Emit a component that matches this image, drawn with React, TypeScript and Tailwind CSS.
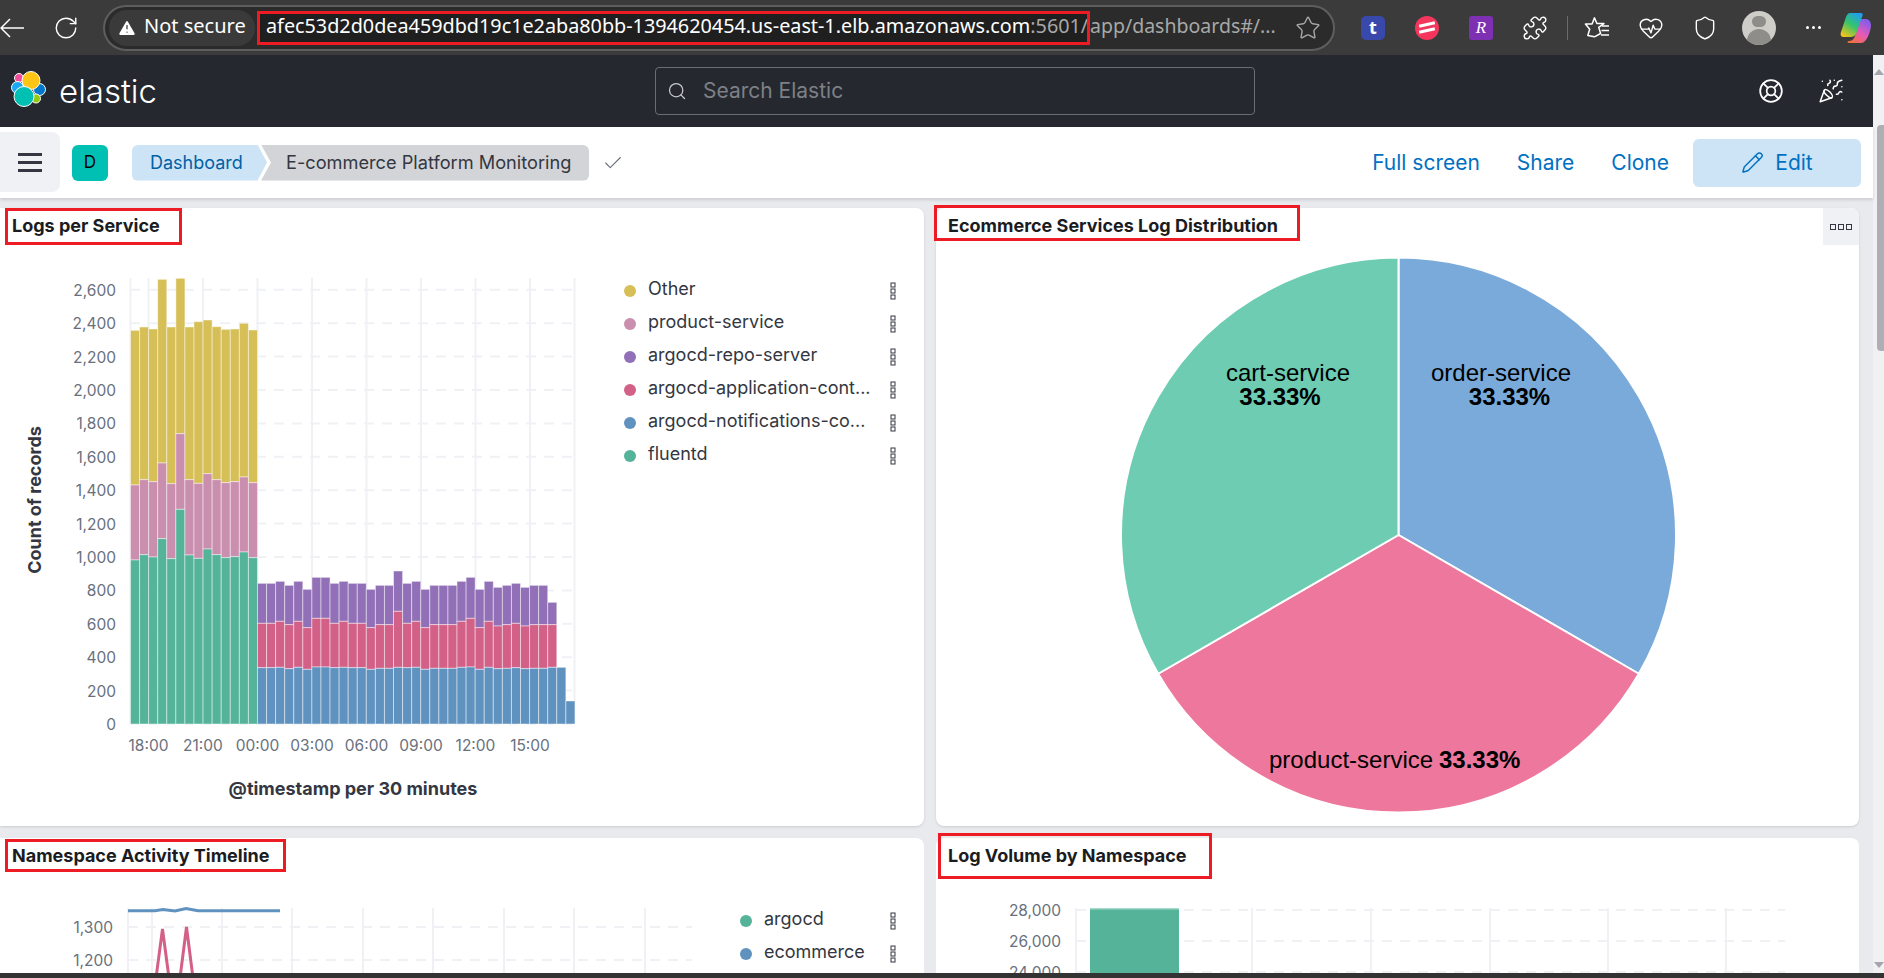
import {
  Check,
  HeartPulse,
  LifeBuoy,
  PartyPopper,
  Pencil,
  Puzzle,
  RotateCw,
  Search,
  Shield,
  Star,
  TriangleAlert,
} from "lucide-react";

const yellow = "#d6bf57";
const pink = "#ca8eae";
const green = "#54b399";
const purple = "#9170b8";
const red = "#d36086";
const blue = "#6092c0";

// bar tops, read off the screenshot in 3x crop units
const earlyTotal = [211, 201, 207, 58, 201, 55, 201, 185, 180, 200, 208, 207, 190, 210];
const earlyPink = [675, 659, 665, 609, 671, 521, 659, 670, 641, 659, 668, 665, 651, 668];
const earlyGreen = [900, 884, 891, 836, 896, 748, 885, 895, 867, 884, 893, 890, 876, 893];
const latePurple = [100, 100, 94, 106, 94, 118, 82, 82, 100, 94, 100, 100, 118, 106, 106, 63, 100, 94, 118, 106, 106, 106, 94, 82, 118, 94, 112, 106, 100, 112, 106, 106, 157];
const lateRed = [220, 220, 214, 224, 214, 233, 205, 205, 220, 214, 220, 220, 233, 224, 224, 184, 220, 214, 233, 224, 224, 224, 214, 205, 233, 214, 228, 224, 220, 228, 224, 224, 224];
const lateBlue = [353, 353, 352, 356, 352, 358, 351, 351, 353, 352, 353, 353, 358, 355, 355, 352, 353, 352, 358, 355, 355, 355, 352, 351, 358, 352, 356, 355, 353, 356, 355, 355, 352, 352, 453];

const baseY = 724;
const barX0 = 130.5;
const barW = 9.07;

function Segment({ i, y0, y1, fill }: { i: number; y0: number; y1: number; fill: string }) {
  return (
    <rect
      x={barX0 + i * barW}
      y={y0}
      width={barW}
      height={y1 - y0}
      fill={fill}
      stroke="#ffffff"
      strokeOpacity={0.45}
      strokeWidth={1}
    />
  );
}

function LogsChart() {
  const ticks = [2600, 2400, 2200, 2000, 1800, 1600, 1400, 1200, 1000, 800, 600, 400, 200, 0];
  const hours = ["18:00", "21:00", "00:00", "03:00", "06:00", "09:00", "12:00", "15:00"];
  const hourX = [148.5, 203, 257.5, 312, 366.5, 421, 475.5, 530];
  const t1 = (z: number) => 260 + z / 3;
  const t2 = (z: number) => 550 + z / 3;

  return (
    <svg viewBox="0 244 620 582" className="w-[620px] h-[582px] shrink-0 font-['Inter',sans-serif]">
      {[130.5, ...hourX, 574.5].map((x) => (
        <line key={x} x1={x} x2={x} y1={278} y2={724} stroke="#f0f1f5" strokeWidth={2} />
      ))}
      {ticks.map((t) => (
        <line
          key={t}
          x1={130}
          x2={575}
          y1={baseY - t * 0.167}
          y2={baseY - t * 0.167}
          stroke="#f0f1f5"
          strokeWidth={2}
          strokeDasharray="10 8"
        />
      ))}
      {earlyTotal.map((z, i) => (
        <g key={i}>
          <Segment i={i} y0={t1(z)} y1={t1(earlyPink[i])} fill={yellow} />
          <Segment i={i} y0={t1(earlyPink[i])} y1={t1(earlyGreen[i])} fill={pink} />
          <Segment i={i} y0={t1(earlyGreen[i])} y1={baseY} fill={green} />
        </g>
      ))}
      {lateBlue.map((z, i) => (
        <g key={i}>
          {i < latePurple.length && <Segment i={i + 14} y0={t2(latePurple[i])} y1={t2(lateRed[i])} fill={purple} />}
          {i < lateRed.length && <Segment i={i + 14} y0={t2(lateRed[i])} y1={t2(z)} fill={red} />}
          <Segment i={i + 14} y0={t2(z)} y1={baseY} fill={blue} />
        </g>
      ))}
      {ticks.map((t) => (
        <text key={t} x={116} y={baseY - t * 0.167 + 6} textAnchor="end" fontSize={15.5} fill="#69707d">
          {t.toLocaleString("en-US")}
        </text>
      ))}
      {hours.map((h, i) => (
        <text key={h} x={hourX[i]} y={751} textAnchor="middle" fontSize={15.5} fill="#69707d">
          {h}
        </text>
      ))}
      <text x={353} y={795} textAnchor="middle" fontSize={18} fontWeight={700} fill="#343741">
        @timestamp per 30 minutes
      </text>
      <text
        x={0}
        y={0}
        transform="translate(41 500) rotate(-90)"
        textAnchor="middle"
        fontSize={18}
        fontWeight={700}
        fill="#343741"
      >
        Count of records
      </text>
    </svg>
  );
}

function PieChart() {
  const cx = 1398.5;
  const cy = 535;
  const r = 277.5;
  const dx = r * Math.cos(Math.PI / 6);
  const dy = r * Math.sin(Math.PI / 6);
  return (
    <svg viewBox="936 244 923 582" className="w-[923px] h-[582px] font-['Liberation_Sans',Arial,sans-serif]">
      <path d={`M${cx} ${cy} L${cx} ${cy - r} A${r} ${r} 0 0 1 ${cx + dx} ${cy + dy} Z`} fill="#79aad9" stroke="#fff" strokeWidth={2} />
      <path d={`M${cx} ${cy} L${cx + dx} ${cy + dy} A${r} ${r} 0 0 1 ${cx - dx} ${cy + dy} Z`} fill="#ee789d" stroke="#fff" strokeWidth={2} />
      <path d={`M${cx} ${cy} L${cx - dx} ${cy + dy} A${r} ${r} 0 0 1 ${cx} ${cy - r} Z`} fill="#6dccb1" stroke="#fff" strokeWidth={2} />
      <text x={1288} y={381} textAnchor="middle" fontSize={24} fill="#000">cart-service</text>
      <text x={1280} y={405} textAnchor="middle" fontSize={24} fontWeight={700} fill="#000">33.33%</text>
      <text x={1501} y={381} textAnchor="middle" fontSize={24} fill="#000">order-service</text>
      <text x={1509.5} y={405} textAnchor="middle" fontSize={24} fontWeight={700} fill="#000">33.33%</text>
      <text x={1269} y={768} fontSize={24} fill="#000">product-service</text>
      <text x={1439} y={768} fontSize={24} fontWeight={700} fill="#000">33.33%</text>
    </svg>
  );
}

function TimelineChart() {
  const vx = [128, 152, 222, 292, 363, 433, 504, 574, 645];
  return (
    <svg viewBox="0 874 720 104" className="w-[720px] h-[104px] shrink-0 font-['Inter',sans-serif]">
      {vx.map((x) => (
        <line key={x} x1={x} x2={x} y1={908} y2={978} stroke="#f0f1f5" strokeWidth={2} />
      ))}
      {[927, 960].map((y) => (
        <line key={y} x1={128} x2={692} y1={y} y2={y} stroke="#f0f1f5" strokeWidth={2} strokeDasharray="10 8" />
      ))}
      <polyline points="128,910.7 155,910.7 163,909.5 175,911 186,908.5 198,910.7 280,910.7" fill="none" stroke={blue} strokeWidth={3} />
      <polyline points="156,978 162.5,929 169,978" fill="none" stroke={red} strokeWidth={3} />
      <polyline points="180,978 186.5,927 193,978" fill="none" stroke={red} strokeWidth={3} />
      <text x={113} y={933} textAnchor="end" fontSize={15.5} fill="#69707d">1,300</text>
      <text x={113} y={966} textAnchor="end" fontSize={15.5} fill="#69707d">1,200</text>
    </svg>
  );
}

function VolumeChart() {
  const vx = [1076, 1252, 1371, 1490, 1608, 1726];
  return (
    <svg viewBox="936 874 923 104" className="w-[923px] h-[104px] font-['Inter',sans-serif]">
      {vx.map((x) => (
        <line key={x} x1={x} x2={x} y1={908} y2={978} stroke="#f0f1f5" strokeWidth={2} />
      ))}
      {[910, 941, 972].map((y) => (
        <line key={y} x1={1076} x2={1785} y1={y} y2={y} stroke="#f0f1f5" strokeWidth={2} strokeDasharray="10 8" />
      ))}
      <rect x={1090} y={908} width={89} height={70} fill={green} />
      <rect x={1090} y={908} width={89} height={1.5} fill="#a6d9ca" />
      <text x={1061} y={916} textAnchor="end" fontSize={15.5} fill="#69707d">28,000</text>
      <text x={1061} y={947} textAnchor="end" fontSize={15.5} fill="#69707d">26,000</text>
      <text x={1061} y={978} textAnchor="end" fontSize={15.5} fill="#69707d">24,000</text>
    </svg>
  );
}

function Kebab() {
  return (
    <svg width="6" height="18" viewBox="0 0 6 18" className="shrink-0">
      <rect x="1" y="1" width="4" height="4" fill="#fff" stroke="#343741" strokeWidth="1" />
      <rect x="1" y="7" width="4" height="4" fill="#fff" stroke="#343741" strokeWidth="1" />
      <rect x="1" y="13" width="4" height="4" fill="#fff" stroke="#343741" strokeWidth="1" />
    </svg>
  );
}

function Legend({ items, className }: { items: { label: string; color: string }[]; className: string }) {
  return (
    <div className={className}>
      {items.map((item) => (
        <div key={item.label} className="flex items-center h-[33px]">
          <span className="w-3 h-3 rounded-full shrink-0" style={{ backgroundColor: item.color }} />
          <span className="ml-[12px] flex-1 pb-1 text-[18px] text-[#343741] whitespace-nowrap font-['Inter',sans-serif]">
            {item.label}
          </span>
          <Kebab />
        </div>
      ))}
    </div>
  );
}

function PanelTitle({ children }: { children: string }) {
  return (
    <div className="h-9 px-3 pb-[1px] flex items-center text-[18px] font-bold text-[#1a1c21] font-['Inter',sans-serif] whitespace-nowrap">
      {children}
    </div>
  );
}

function ElasticLogo() {
  return (
    <svg viewBox="0 0 40 40" className="w-10 h-10 shrink-0">
      <g stroke="#fff" strokeWidth="1">
        <circle cx="9" cy="7" r="4.5" fill="#f04e98" />
        <circle cx="7.5" cy="16.5" r="6" fill="#1ba9f5" />
        <circle cx="29.5" cy="18.5" r="6" fill="#0077cc" />
        <circle cx="26" cy="27.5" r="4.5" fill="#93c90e" />
        <circle cx="21" cy="9.5" r="9" fill="#fec514" />
        <circle cx="14" cy="25.5" r="10" fill="#00bfb3" />
      </g>
    </svg>
  );
}

function FavoritesIcon() {
  return (
    <svg width="26" height="26" viewBox="0 0 26 26" fill="none" stroke="#fff" strokeWidth="1.6" strokeLinejoin="round">
      <path d="M11 3l2.6 6H21l-5.5 4 2 6.5L11 23l-7 -1.5L6 15 1.5 9.5H8.5z" transform="scale(0.95)" />
      <path d="M18 11h7M17.5 15.5h7.500M17 20h8" />
    </svg>
  );
}

function CopilotIcon() {
  return (
    <svg width="32" height="32" viewBox="0 0 32 32" className="shrink-0">
      <defs>
        <linearGradient id="cp1" x1="0.8" y1="0" x2="0.2" y2="1">
          <stop offset="0" stopColor="#1e9cf5" />
          <stop offset="0.5" stopColor="#35c46b" />
          <stop offset="1" stopColor="#f5c518" />
        </linearGradient>
        <linearGradient id="cp2" x1="0.8" y1="0" x2="0.2" y2="1">
          <stop offset="0" stopColor="#7b5cf0" />
          <stop offset="0.55" stopColor="#e85ab5" />
          <stop offset="1" stopColor="#f2703c" />
        </linearGradient>
      </defs>
      <path d="M20 7h6c3 0 5 3 5 6 0 5-3 13-6 16-1 1-2 2-4 2H9c-2 0-2-2 0-2 3 0 5-2 6-5z" fill="url(#cp2)" />
      <path d="M10 1h11c2 0 2 2 1 4l-6 17c-1 2-3 3-5 3H4c-3 0-4-2-3-5L6 5c1-2 2-4 4-4z" fill="url(#cp1)" />
    </svg>
  );
}

function BrowserBar() {
  return (
    <div className="h-[55px] shrink-0 flex items-center bg-[#3b3b3b] text-white font-['Noto_Sans',sans-serif]">
      <svg width="24" height="24" viewBox="0 0 24 24" fill="none" stroke="#fff" strokeWidth="1.5" className="shrink-0">
        <path d="M24 12H1M10 3l-9 9 9 9" />
      </svg>
      <RotateCw size={26} strokeWidth={1.3} className="ml-[29px] shrink-0" />
      <div className="ml-[24px] w-[1232px] h-[46px] flex items-center rounded-full bg-[#2b2b2b] border-2 border-[#5e5e5e] shrink-0">
        <div className="ml-[4px] w-[146px] h-9 flex items-center rounded-full bg-[#3a3a3a] pl-[8px] text-[20px]">
          <TriangleAlert size={20} fill="#fff" stroke="#3a3a3a" strokeWidth={1.5} className="shrink-0" />
          <span className="ml-[7px] pb-1 whitespace-nowrap">Not secure</span>
        </div>
        <div className="ml-[2px] w-[833px] h-[34px] flex items-center border-[3px] border-[#ed1c24] bg-[#1f1f1f] pl-[6px] pb-1 text-[19.8px] whitespace-nowrap overflow-hidden">
          afec53d2d0dea459dbd19c1e2aba80bb-1394620454.us-east-1.elb.amazonaws.com
          <span className="text-[#a8a8a8]">:5601/</span>
        </div>
        <span className="pb-1 text-[19.5px] text-[#a8a8a8] whitespace-nowrap">app/dashboards#/...</span>
        <Star size={26} strokeWidth={1.3} className="ml-[19px] text-[#a8a8a8] shrink-0" />
      </div>
      <div className="ml-[11px] w-[54px] flex justify-center">
        <span className="w-6 h-6 rounded-[5px] bg-[#3949ab] flex items-center justify-center text-[18px] font-bold">t</span>
      </div>
      <div className="w-[54px] flex justify-center">
        <span className="w-6 h-6 rounded-full bg-[#f5365c] flex flex-col items-center justify-center gap-[3px]">
          <span className="w-4 h-[3px] bg-white -rotate-12" />
          <span className="w-4 h-[3px] bg-white -rotate-12" />
        </span>
      </div>
      <div className="w-[54px] flex justify-center">
        <span className="w-6 h-6 rounded-[3px] bg-[#7e30b3] flex items-center justify-center text-[17px] italic font-['Liberation_Serif',serif]">R</span>
      </div>
      <div className="w-[54px] flex justify-center">
        <Puzzle size={26} strokeWidth={1.3} />
      </div>
      <div className="ml-[5px] w-px h-6 bg-[#6a6a6a]" />
      <div className="ml-[2px] w-[54px] flex justify-center">
        <FavoritesIcon />
      </div>
      <div className="w-[54px] flex justify-center">
        <HeartPulse size={26} strokeWidth={1.3} />
      </div>
      <div className="w-[54px] flex justify-center">
        <Shield size={26} strokeWidth={1.3} />
      </div>
      <div className="w-[54px] flex justify-center">
        <span className="w-[34px] h-[34px] rounded-full bg-[#cfcdc8] overflow-hidden flex flex-col items-center">
          <span className="mt-[5px] w-[14px] h-[14px] rounded-full bg-[#8f8d89]" />
          <span className="mt-[2px] w-6 h-5 rounded-t-full bg-[#8f8d89]" />
        </span>
      </div>
      <div className="w-[54px] flex justify-center gap-[3px]">
        <span className="w-[3px] h-[3px] rounded-full bg-white" />
        <span className="w-[3px] h-[3px] rounded-full bg-white" />
        <span className="w-[3px] h-[3px] rounded-full bg-white" />
      </div>
      <CopilotIcon />
    </div>
  );
}

function ElasticHeader() {
  return (
    <div className="h-[72px] shrink-0 flex items-center bg-[#25282f] font-['Inter',sans-serif]">
      <div className="ml-[10px] flex items-center">
        <ElasticLogo />
        <span className="ml-[9px] text-[33px] text-white font-light leading-none">elastic</span>
      </div>
      <div className="ml-[498px] w-[600px] h-[48px] flex items-center rounded-[4px] border border-[#6a6d72] pl-[9px] text-[21px] text-[#7d8086]">
        <Search size={20} strokeWidth={1.5} className="ml-[2px] text-[#c9cbcd]" />
        <span className="ml-[16px]">Search Elastic</span>
      </div>
      <LifeBuoy size={26} strokeWidth={1.6} className="ml-auto text-white" />
      <PartyPopper size={26} strokeWidth={1.4} className="ml-[34px] mr-[29px] text-white" />
    </div>
  );
}

function CrumbBar() {
  return (
    <div className="relative z-10 h-[71px] shrink-0 flex items-center bg-white shadow-[0_2px_3px_rgba(0,0,0,0.12)] font-['Inter',sans-serif] text-[18px]">
      <div className="w-[60px] h-[60px] -mt-[1px] rounded-r-[8px] bg-[#f0f1f4] flex flex-col items-center justify-center gap-[5px]">
        <span className="w-6 h-[3px] bg-[#343741]" />
        <span className="w-6 h-[3px] bg-[#343741]" />
        <span className="w-6 h-[3px] bg-[#343741]" />
      </div>
      <div className="ml-3 w-9 h-9 rounded-[6px] bg-[#00bfb3] flex items-center justify-center text-[#000] text-[17px]">D</div>
      <div className="ml-6 flex items-center h-9">
        <div className="relative z-10 h-9 w-[135px] pl-[18px] flex items-center text-[#0061a6] bg-[#cce4f5] rounded-l-[6px] [clip-path:polygon(0_0,93%_0,100%_50%,93%_100%,0_100%)]">
          Dashboard
        </div>
        <div className="h-9 w-[328px] -ml-[6px] pl-[25px] flex items-center text-[#343741] bg-[#d3d4d7] rounded-r-[6px] whitespace-nowrap text-[18.2px] [clip-path:polygon(0_0,100%_0,100%_100%,0_100%,10px_50%)]">
          E-commerce Platform Monitoring
        </div>
      </div>
      <Check size={22} strokeWidth={1.2} className="ml-[13px] text-[#69707d]" />
      <div className="ml-auto flex items-center text-[#0071c2] text-[21px]">
        <span>Full screen</span>
        <span className="ml-[37px]">Share</span>
        <span className="ml-[37px]">Clone</span>
        <div className="ml-6 w-[168px] h-[48px] rounded-[6px] bg-[#cce4f5] flex items-center justify-center mr-3">
          <Pencil size={23} strokeWidth={1.5} />
          <span className="ml-[11px]">Edit</span>
        </div>
      </div>
    </div>
  );
}

const logLegend = [
  { label: "Other", color: yellow },
  { label: "product-service", color: pink },
  { label: "argocd-repo-server", color: purple },
  { label: "argocd-application-cont...", color: red },
  { label: "argocd-notifications-co...", color: blue },
  { label: "fluentd", color: green },
];

const nsLegend = [
  { label: "argocd", color: green },
  { label: "ecommerce", color: blue },
];

export default function App() {
  return (
    <div className="relative h-screen w-full overflow-hidden flex flex-col bg-white">
      <BrowserBar />
      <div className="flex flex-1 min-h-0">
        <div className="flex-1 min-w-0 flex flex-col">
          <ElasticHeader />
          <CrumbBar />
          <div className="flex-1 min-h-0 bg-[#e8eaed] pt-[10px]">
            <div className="grid grid-cols-[924px_923px] grid-rows-[618px_140px] gap-x-3 gap-y-3">
              <div className="relative bg-white rounded-r-[8px] shadow-sm">
                <PanelTitle>Logs per Service</PanelTitle>
                <div className="flex">
                  <LogsChart />
                  <Legend items={logLegend} className="w-[272px] ml-[4px] pt-[30px] h-fit" />
                </div>
                <div className="absolute left-[5px] top-0 w-[177px] h-[37px] border-[3px] border-[#ed1c24]" />
              </div>
              <div className="relative bg-white rounded-[8px] shadow-sm">
                <PanelTitle>Ecommerce Services Log Distribution</PanelTitle>
                <PieChart />
                <div className="absolute -left-[2px] -top-[3px] w-[366px] h-[36px] border-[3px] border-[#ed1c24]" />
                <div className="absolute right-0 top-0 w-9 h-[37px] rounded-tr-[8px] bg-[#f0f1f4] flex items-center justify-center gap-[2px]">
                  <span className="w-[6px] h-[6px] border border-[#343741]" />
                  <span className="w-[6px] h-[6px] border border-[#343741]" />
                  <span className="w-[6px] h-[6px] border border-[#343741]" />
                </div>
              </div>
              <div className="relative bg-white rounded-tr-[8px]">
                <PanelTitle>Namespace Activity Timeline</PanelTitle>
                <div className="flex">
                  <TimelineChart />
                  <Legend items={nsLegend} className="w-[156px] ml-[20px] pt-[30px] h-fit" />
                </div>
                <div className="absolute left-[5px] top-[1px] w-[281px] h-[33px] border-[3px] border-[#ed1c24]" />
              </div>
              <div className="relative bg-white rounded-t-[8px]">
                <PanelTitle>Log Volume by Namespace</PanelTitle>
                <VolumeChart />
                <div className="absolute left-[2px] -top-[5px] w-[274px] h-[46px] border-[3px] border-[#ed1c24]" />
              </div>
            </div>
          </div>
        </div>
        <div className="w-[11px] shrink-0 flex flex-col items-center bg-[#f1f1f3]">
          <span className="mt-[14px] w-0 h-0 border-x-[5px] border-x-transparent border-b-[6px] border-b-[#a3a6ad]" />
          <span className="mt-[50px] self-end w-[7px] h-[226px] rounded-l-[4px] bg-[#adafb5]" />
          <span className="mt-auto mb-[10px] w-0 h-0 border-x-[5px] border-x-transparent border-t-[6px] border-t-[#a3a6ad]" />
        </div>
      </div>
      <div className="absolute bottom-0 left-0 right-0 h-[5px] bg-[#333333]" />
    </div>
  );
}
